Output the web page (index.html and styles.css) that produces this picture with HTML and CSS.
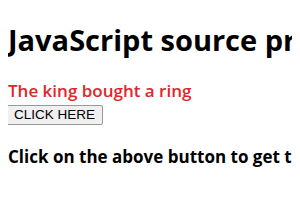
FILE: index.html
```html
<!DOCTYPE html>
<html lang="en">
<head>
  <meta charset="UTF-8">
  <title>JavaScript source program</title>
  <link rel="stylesheet" href="styles.css">
</head>
<body>
  <h1 class="heading">JavaScript source program</h1>
  <p class="sentence">The king bought a ring</p>
  <button class="click-btn">CLICK HERE</button>
  <p class="note">Click on the above button to get the result</p>
</body>
</html>
```

FILE: styles.css
```css
body {
  margin: 8px;
  font-family: "Open Sans", "Noto Sans", sans-serif;
  background: #fff;
  color: #000;
  white-space: nowrap;
  overflow: hidden;
}

.heading {
  font-size: 29px;
  font-weight: bold;
  line-height: 36px;
  margin: 14px 0 0;
}

.sentence {
  color: #e0262b;
  font-size: 17px;
  font-weight: 600;
  line-height: 22px;
  margin: 22px 0 0;
}

.click-btn {
  font-family: "Liberation Sans", Arial, sans-serif;
  font-size: 13.5px;
  height: 20px;
  padding: 0 7px;
  border: 1px solid #999;
  border-radius: 2px;
  background: #f0f0f0;
  margin: 0 0 0 -2px;
}

.note {
  font-size: 17px;
  font-weight: bold;
  line-height: 22px;
  margin: 21px 0 0;
}
```
